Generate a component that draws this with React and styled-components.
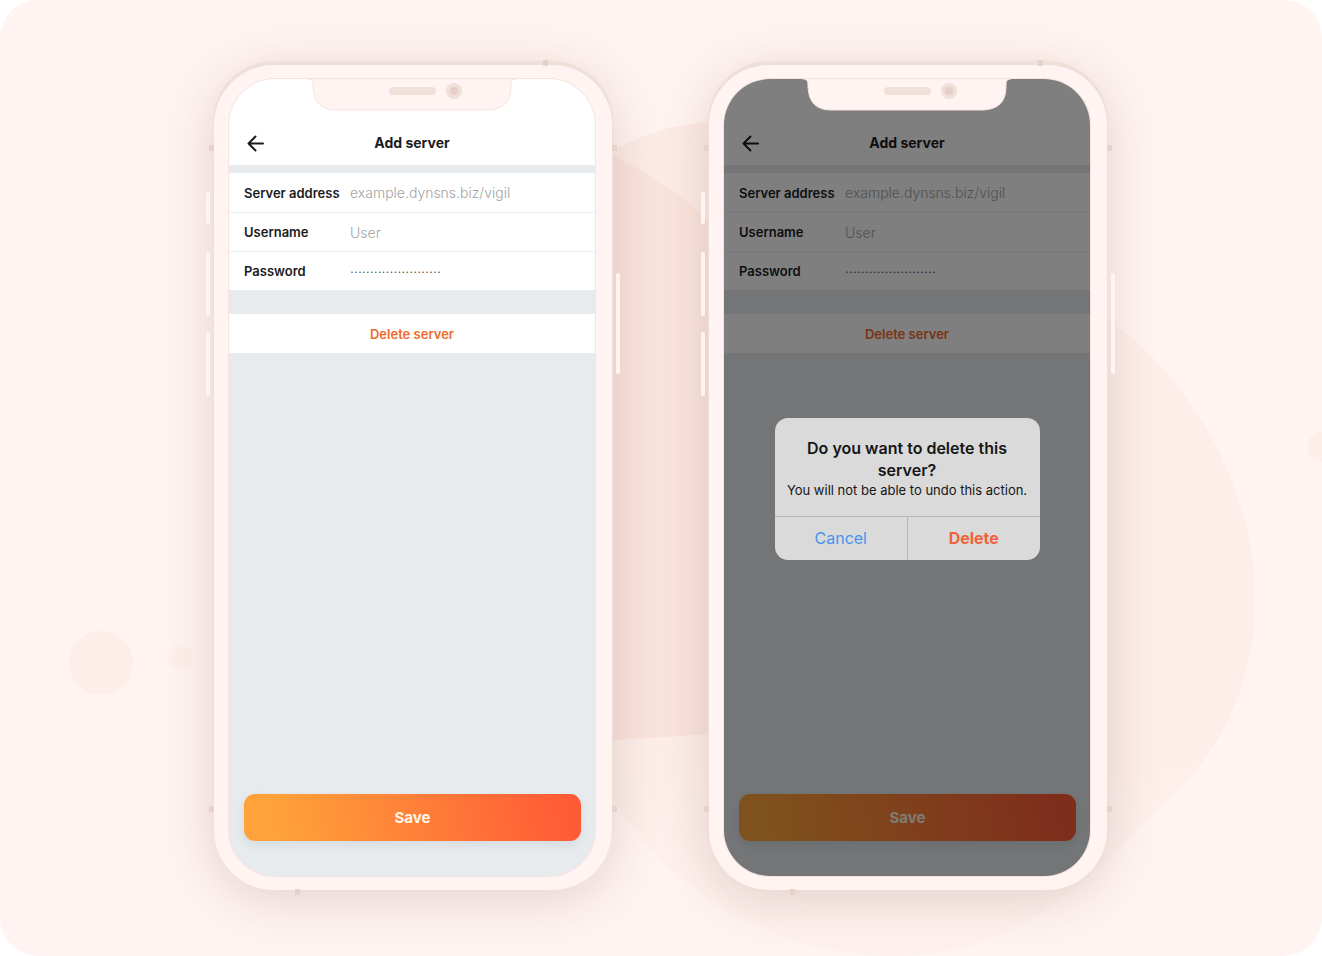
import React, { useId } from 'react'
import styled, { createGlobalStyle } from 'styled-components'


const GlobalStyle = createGlobalStyle`
    * {
        box-sizing: border-box;
    }

    body {
        margin: 0;
        background: #ffffff;
        font-family: Inter, "Liberation Sans", sans-serif;
    }

    button, input {
        font-family: inherit;
        margin: 0;
        border: none;
    }
`;


const Stage = styled.main`
    position: relative;
    display: flex;
    justify-content: center;
    align-items: flex-start;
    gap: 97px;
    min-height: 100vh;
    padding: 65px 25px 65px 24px;
    border-radius: 38px;
    overflow: hidden;
    background: #fff4f1;
`;


const Backdrop = styled.svg`
    position: absolute;
    top: 0;
    left: 50%;
    transform: translateX(-50%);
`;


const Phone = styled.section`
    position: relative;
    flex: 0 1 398px;
    padding: 14px 17px 14px 15px;
    border-radius: 60px;
    background: #fff4f1;
    box-shadow: 0 -3px 1px 1px #eedfd9, 0 8px 52px rgba(110, 65, 60, 0.2);
`;


const SideKey = styled.span`
    position: absolute;
    top: ${(props) => props.$top}px;
    ${(props) => props.$side}: -8px;
    width: 4px;
    height: ${(props) => props.$height}px;
    border-radius: 2px;
    background: #fff4f1;
`;


const Antenna = styled.span`
    position: absolute;
    ${(props) => props.$side}: -5px;
    ${(props) => props.$from}: ${(props) => props.$at}px;
    width: 5px;
    height: 6px;
    background: #e6d2cc;
`;


const Screen = styled.div`
    position: relative;
    display: flex;
    flex-direction: column;
    min-height: 797px;
    border-radius: 46px;
    overflow: hidden;
    background: #e7ebed;
    box-shadow: 0 0 0 1px #f6e3df;
`;


const Notch = styled.svg`
    position: absolute;
    top: 0;
    left: 50%;
    transform: translateX(-50%);
    z-index: 2;
`;


const Header = styled.header`
    display: grid;
    grid-template-columns: 24px 1fr 24px;
    align-items: center;
    height: 86px;
    padding: 42px 15px 0;
    margin-bottom: 8px;
    background: #ffffff;
`;


const BackButton = styled.button`
    display: flex;
    padding: 0;
    background: none;
`;


const Title = styled.h1`
    margin: 0;
    font-size: 14px;
    line-height: 20px;
    font-weight: 700;
    text-align: center;
    color: #1c1c1e;
`;


const Form = styled.form`
    display: flex;
    flex-direction: column;
    flex: 1;
`;


const Row = styled.div`
    display: flex;
    align-items: center;
    height: 39px;
    padding: 0 15px;
    background: #ffffff;

    & + & {
        border-top: 1px solid #eceff0;
    }
`;


const Label = styled.label`
    width: 106px;
    flex-shrink: 0;
    font-size: 13px;
    font-weight: 600;
    color: #1c1c1e;
`;


const Input = styled.input`
    flex: 1;
    min-width: 0;
    padding: 0;
    background: none;
    color: #6f6f6f;
    font-size: 14px;
    font-weight: 300;
    outline: none;

    &::placeholder {
        color: ${(props) => props.$tint || '#a3a3a3'};
        opacity: 1;
    }
`;


const DeleteButton = styled.button`
    height: 39px;
    margin-top: 24px;
    background: #ffffff;
    font-size: 13px;
    font-weight: 600;
    color: #f06a2b;
`;


const SaveButton = styled.button`
    height: 47px;
    margin: auto 14px 35px 15px;
    border-radius: 11px;
    background: linear-gradient(80deg, #ffa23a 10%, #ff5a36 96%);
    box-shadow: 0 4px 10px rgba(80, 110, 120, 0.12);
    font-size: 15px;
    font-weight: 700;
    color: #fff6ea;
`;


const Overlay = styled.div`
    position: absolute;
    inset: 0;
    z-index: 1;
    display: flex;
    align-items: center;
    justify-content: center;
    padding-top: 22px;
    background: rgba(0, 0, 0, 0.5);
`;


const Alert = styled.div`
    width: 265px;
    border-radius: 13px;
    overflow: hidden;
    background: #dadada;
    text-align: center;
    color: #161616;
`;


const AlertBody = styled.div`
    padding: 19px 8px 17px;
`;


const AlertTitle = styled.h2`
    margin: 0;
    padding: 0 16px;
    font-size: 16px;
    line-height: 22px;
    font-weight: 600;
`;


const AlertText = styled.p`
    margin: 0;
    font-size: 13px;
    line-height: 18px;
    white-space: nowrap;
`;


const AlertActions = styled.div`
    display: grid;
    grid-template-columns: 1fr 1fr;
    border-top: 1px solid #b4b5b7;
`;


const AlertButton = styled.button`
    height: 43px;
    background: none;
    font-size: 16px;
    font-weight: ${(props) => (props.$danger ? 700 : 400)};
    color: ${(props) => (props.$danger ? '#f0623a' : '#4794ee')};

    & + & {
        border-left: 1px solid #b4b5b7;
    }
`;


function Shapes() {
  return (
    <Backdrop width="1322" height="956" viewBox="0 0 1322 956" aria-hidden="true">
        <defs>
            <linearGradient id="blob" x1="0" y1="0" x2="0" y2="1">
                <stop offset="0.7" stopColor="#fdeee9"/>
                <stop offset="0.9" stopColor="#fef1ed"/>
            </linearGradient>
        </defs>
        <path d="M907 252 C1100 252 1255 420 1255 600 C1255 690 1215 765 1150 816 C1090 880 1010 962 880 956 C740 950 560 840 560 600 C560 420 700 252 907 252Z" fill="url(#blob)"/>
        <path d="M560 180 L617 148 Q664 124 709 122 L860 140 L860 380 L560 380Z" fill="#fcebe6"/>
        <path d="M560 128 L617 157 Q668 184 709 220 Q820 320 820 500 L790 732 Q700 733 560 744Z" fill="#fae4dc"/>
        <circle cx="101" cy="663" r="32" fill="#feeee9"/>
        <circle cx="180" cy="657" r="12" fill="#fef0eb"/>
        <circle cx="1322" cy="447" r="15" fill="#feeee9"/>
    </Backdrop>
  )
}


function Device({ children }) {
  return (
    <Phone>
        <SideKey $side="left" $top={127} $height={32}/>
        <SideKey $side="left" $top={187} $height={64}/>
        <SideKey $side="left" $top={267} $height={64}/>
        <SideKey $side="right" $top={208} $height={101}/>
        <Antenna $side="left" $from="top" $at={80}/>
        <Antenna $side="right" $from="top" $at={80}/>
        <Antenna $side="left" $from="bottom" $at={78}/>
        <Antenna $side="right" $from="bottom" $at={78}/>
        <Antenna $side="top" $from="right" $at={64}/>
        <Antenna $side="bottom" $from="left" $at={81}/>
        <Screen>
            <Notch width="208" height="32" viewBox="0 0 208 32" aria-hidden="true">
                <path d="M0 0 Q5 0 5 5 V8 Q6 31 28 31 H180 Q203 30 203 8 V5 Q203 0 208 0" fill="#fff4f1" stroke="#f6e3df"/>
                <rect x="81" y="8" width="47" height="8" rx="4" fill="#f0e0da"/>
                <circle cx="146" cy="12" r="8" fill="#f0e0da"/>
                <circle cx="146" cy="12" r="4" fill="#e6cfc8"/>
            </Notch>
            {children}
        </Screen>
    </Phone>
  )
}


function ServerForm() {
  const id = useId()

  return (
    <>
        <Header>
            <BackButton type="button" aria-label="Back">
                <svg width="24" height="24" viewBox="0 0 24 24" fill="none" stroke="#1c1c1e" strokeWidth="2" strokeLinecap="round" strokeLinejoin="round">
                    <path d="M19 12.500H4.500M11.500 5.500L4.500 12.500L11.500 19.500"/>
                </svg>
            </BackButton>
            <Title>Add server</Title>
        </Header>
        <Form>
            <Row>
                <Label htmlFor={id + 'address'}>Server address</Label>
                <Input id={id + 'address'} type="text" placeholder="example.dynsns.biz/vigil"/>
            </Row>
            <Row>
                <Label htmlFor={id + 'user'}>Username</Label>
                <Input id={id + 'user'} type="text" placeholder="User"/>
            </Row>
            <Row>
                <Label htmlFor={id + 'password'}>Password</Label>
                <Input id={id + 'password'} type="password" placeholder={'·'.repeat(23)} $tint="#4f4f4f"/>
            </Row>
            <DeleteButton type="button">Delete server</DeleteButton>
            <SaveButton type="button">Save</SaveButton>
        </Form>
    </>
  )
}


function DeleteAlert() {
  return (
    <Overlay>
        <Alert role="alertdialog" aria-labelledby="alert-title" aria-describedby="alert-text">
            <AlertBody>
                <AlertTitle id="alert-title">Do you want to delete this server?</AlertTitle>
                <AlertText id="alert-text">You will not be able to undo this action.</AlertText>
            </AlertBody>
            <AlertActions>
                <AlertButton type="button">Cancel</AlertButton>
                <AlertButton type="button" $danger>Delete</AlertButton>
            </AlertActions>
        </Alert>
    </Overlay>
  )
}


function App() {
  return (
    <>
        <GlobalStyle/>
        <Stage>
            <Shapes/>
            {/********** */}
            <Device>
                <ServerForm/>
            </Device>
            {/********** */}
            <Device>
                <ServerForm/>
                <DeleteAlert/>
            </Device>
        </Stage>
    </>
  )
}

export default App
